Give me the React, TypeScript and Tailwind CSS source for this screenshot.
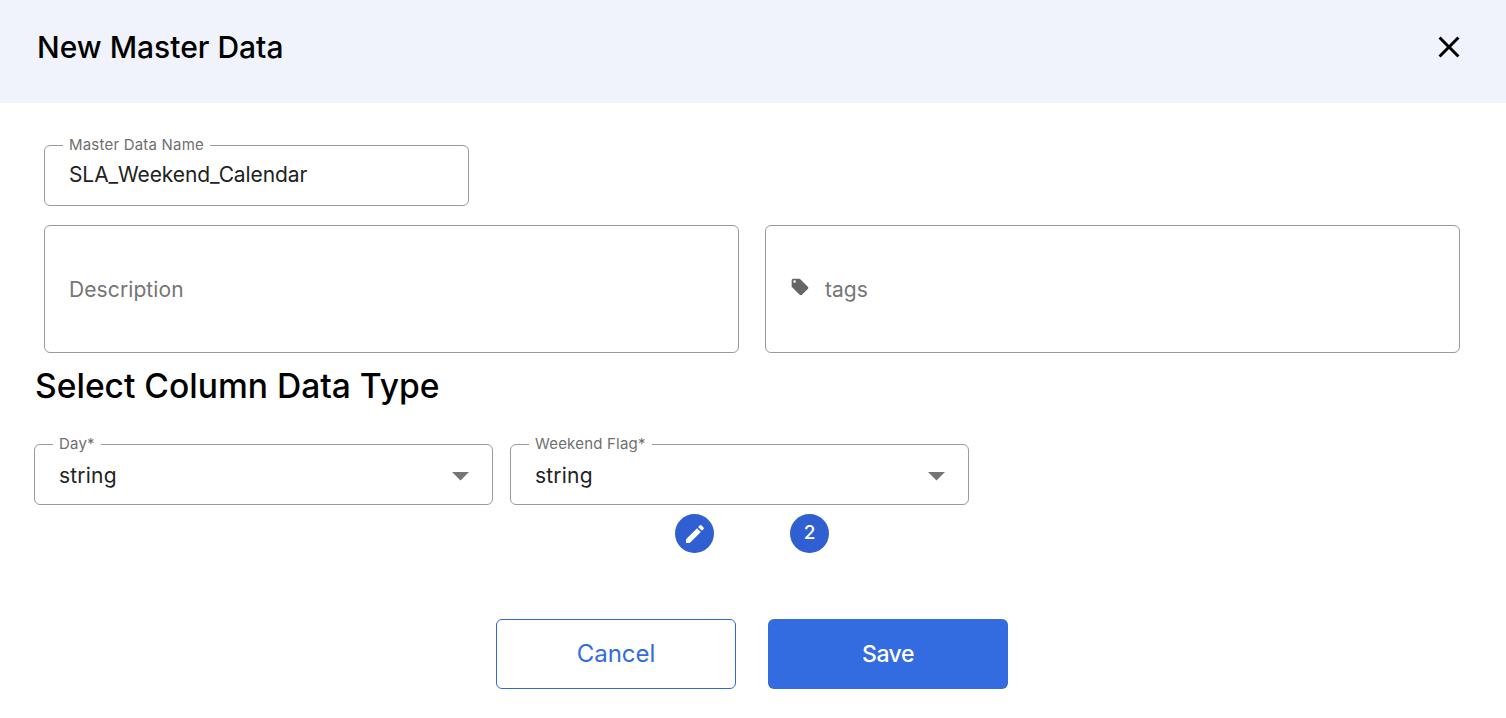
import React from "react";

const EDIT_PATH =
  "M3 17.25V21h3.75L17.81 9.94l-3.75-3.75L3 17.25zM20.71 7.04c.39-.39.39-1.02 0-1.41l-2.34-2.34a.9959.9959 0 0 0-1.41 0l-1.83 1.83 3.75 3.75 1.83-1.83z";
const TAG_PATH =
  "M21.41 11.58l-9-9C12.05 2.22 11.55 2 11 2H4c-1.1 0-2 .9-2 2v7c0 .55.22 1.05.59 1.42l9 9c.36.36.86.58 1.41.58.55 0 1.05-.22 1.41-.59l7-7c.37-.36.59-.86.59-1.41 0-.55-.23-1.06-.59-1.42zM5.5 7C4.67 7 4 6.33 4 5.5S4.67 4 5.5 4 7 4.67 7 5.5 6.33 7 5.5 7z";
const CLOSE_PATH =
  "M19 6.41 17.59 5 12 10.59 6.41 5 5 6.41 10.59 12 5 17.59 6.41 19 12 13.41 17.59 19 19 17.59 13.41 12z";

interface OutlinedFieldProps {
  label: string;
  value: string;
  className: string;
  children?: React.ReactNode;
}

// notched outline, the label sits in the gap of the top border
const OutlinedField: React.FC<OutlinedFieldProps> = ({ label, value, className, children }) => (
  <fieldset className={`h-[68px] rounded-[6px] border border-[#9a9a9a] pl-[18px] ${className}`}>
    <legend className="px-[6px] text-[15px] leading-[14px] tracking-[0.2px] text-[#6f6f6f]">{label}</legend>
    <div className={`flex items-center justify-between pl-[6px] pr-[23px] ${children ? "pt-[11px]" : "pt-[9px]"}`}>
      <span className={`text-[21px] leading-[28px] text-[#222222] ${children ? "tracking-[0.2px]" : "tracking-[-0.1px]"}`}>
        {value}
      </span>
      {children}
    </div>
  </fieldset>
);

const DropArrow = () => (
  <svg width="17" height="9" viewBox="0 0 17 9">
    <path d="M0 0h17L8.5 8.5z" fill="#757575" />
  </svg>
);

const App: React.FC = () => {
  return (
    <div className="h-[718px] w-[1506px] overflow-hidden bg-white font-['Inter','Liberation_Sans',sans-serif]">
      <header className="flex h-[103px] items-center justify-between bg-[#f0f3fc] pb-[10px] pl-[37px] pr-[39px]">
        <h1 className="text-[30px] font-medium leading-[36px] text-black">New Master Data</h1>
        <svg width="36" height="36" viewBox="0 0 24 24" fill="#000000">
          <path d={CLOSE_PATH} />
        </svg>
      </header>

      <main className="flex flex-col">
        <div className="pl-[44px] pt-[35px]">
          <OutlinedField label="Master Data Name" value="SLA_Weekend_Calendar" className="w-[425px]" />
        </div>

        <div className="flex gap-[26px] pl-[44px] pt-[19px]">
          <div className="flex h-[128px] w-[695px] items-center rounded-[6px] border border-[#9a9a9a] pl-[24px]">
            <span className="pt-[1px] text-[21px] tracking-[0.1px] text-[#757575]">Description</span>
          </div>
          <div className="flex h-[128px] w-[695px] items-center rounded-[6px] border border-[#9a9a9a] pl-[24px]">
            <svg width="20" height="20" viewBox="0 0 24 24" fill="#666666" className="mb-[5px]">
              <path d={TAG_PATH} />
            </svg>
            <span className="ml-[15px] pt-[1px] text-[21px] text-[#757575]">tags</span>
          </div>
        </div>

        <h2 className="pl-[35px] pt-[13px] text-[33.6px] font-medium leading-[40px] text-black">
          Select Column Data Type
        </h2>

        <div className="flex gap-[17px] pl-[34px] pt-[31px]">
          <OutlinedField label="Day*" value="string" className="w-[459px]">
            <DropArrow />
          </OutlinedField>
          <OutlinedField label="Weekend Flag*" value="string" className="w-[459px]">
            <DropArrow />
          </OutlinedField>
        </div>

        <div className="flex gap-[76px] pl-[675px] pt-[9px]">
          <div className="flex h-[39px] w-[39px] items-center justify-center rounded-full bg-[#2f5fd0]">
            <svg width="24" height="24" viewBox="0 0 24 24" fill="#ffffff">
              <path d={EDIT_PATH} />
            </svg>
          </div>
          <div className="flex h-[39px] w-[39px] items-center justify-center rounded-full bg-[#2f5fd0] text-[19px] font-medium text-white">
            2
          </div>
        </div>

        <div className="flex gap-[32px] pl-[496px] pt-[66px]">
          <button className="h-[70px] w-[240px] rounded-[6px] border border-[#2f66d9] bg-white text-[24px] text-[#346ce0]">
            Cancel
          </button>
          <button className="h-[70px] w-[240px] rounded-[6px] bg-[#336be0] text-[23px] font-medium tracking-[-0.5px] text-white">
            Save
          </button>
        </div>
      </main>
    </div>
  );
};

export default App;
